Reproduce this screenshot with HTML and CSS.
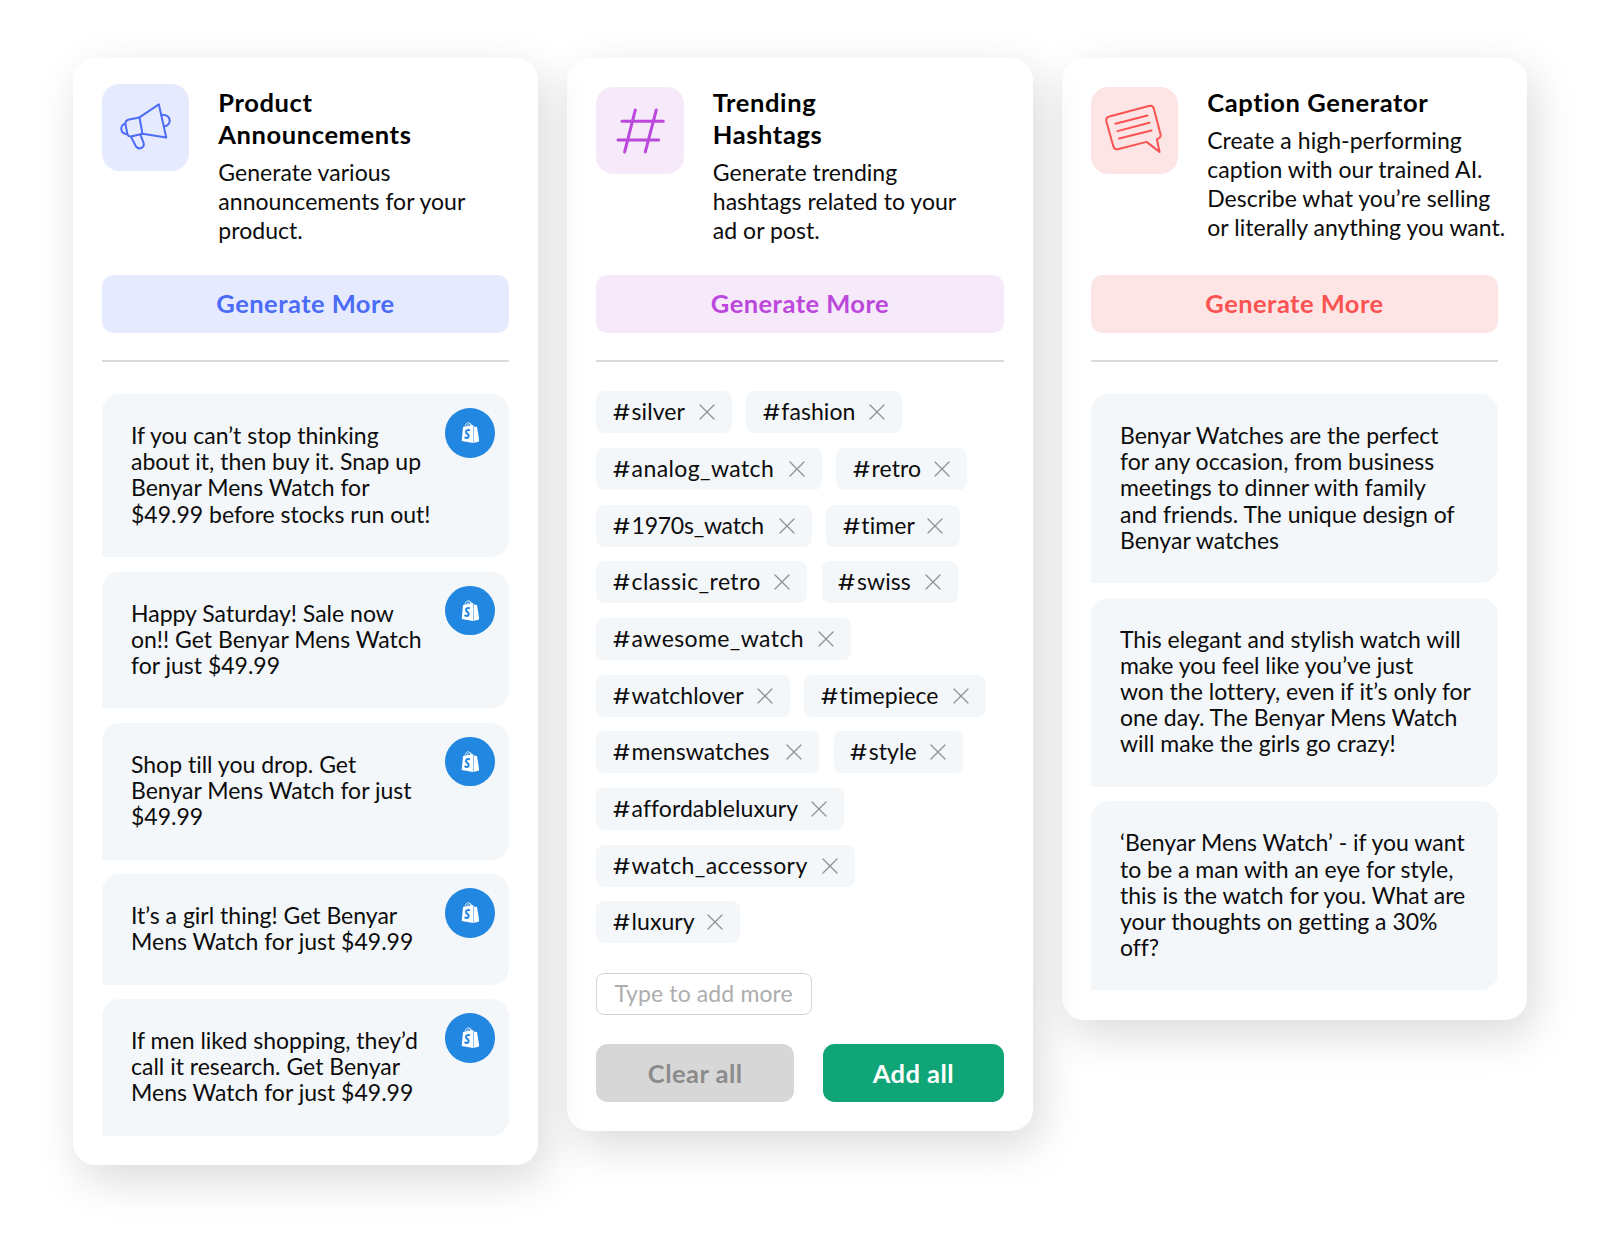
FILE: index.html
```html
<!DOCTYPE html>
<html lang="en">
<head>
<meta charset="utf-8">
<title>AI Content Generator</title>
<link rel="stylesheet" href="styles.css">
</head>
<body>
<svg class="defs" aria-hidden="true">
  <symbol id="bag" viewBox="92 84 56 64">
    <path d="M104 98C105 91 109 86 114 86C119 86 121 91 121 97M110 97C112 91 116 88 119 89C123 90 124 93 124 96" fill="none" stroke="#fff" stroke-width="2.2"/>
    <path d="M98 99L128 93V147L94 141Z" fill="#fff"/>
    <path d="M129.500 94L133 98L140 99L147 142L129.500 147Z" fill="#fff"/>
    <path d="M119 109C113 106 107 109 107 114C107 120 116 120 115 127C114 133 107 133 103 129" fill="none" stroke="#2187e0" stroke-width="6"/>
  </symbol>
  <symbol id="x" viewBox="0 0 16 16"><path d="M1 1L15 15M15 1L1 15" fill="none" stroke="#8f9194" stroke-width="1.300" stroke-linecap="round"/></symbol>
</svg>
<main class="board">
  <section class="card card--blue">
    <header class="head">
      <div class="tile tile--raised">
        <svg viewBox="36 27 261 261" stroke-width="6">
          <path d="M148 127L206 88L228 187L157 176Z"/>
          <path d="M148 127L117 133Q105 136 106 147L112 177Q114 184 123 184L157 176"/>
          <path d="M106 146C88 148 89 177 112 177"/>
          <path d="M214 120C243 116 247 150 222 154"/>
          <path d="M123 185L136 211C144 226 166 219 160 202L151 179"/>
        </svg>
      </div>
      <div class="intro">
        <h2>Product<br>Announcements</h2>
        <p>Generate various<br>announcements for your<br>product.</p>
      </div>
    </header>
    <button class="btn btn--tint">Generate More</button>
    <hr>
    <div class="list">
      <article class="item"><p>If you can’t stop thinking<br>about it, then buy it. Snap up<br>Benyar Mens Watch for<br>$49.99 before stocks run out!</p><span class="badge"><svg><use href="#bag"/></svg></span></article>
      <article class="item"><p>Happy Saturday! Sale now<br>on!! Get Benyar Mens Watch<br>for just $49.99</p><span class="badge"><svg><use href="#bag"/></svg></span></article>
      <article class="item"><p>Shop till you drop. Get<br>Benyar Mens Watch for just<br>$49.99</p><span class="badge"><svg><use href="#bag"/></svg></span></article>
      <article class="item"><p>It’s a girl thing! Get Benyar<br>Mens Watch for just $49.99</p><span class="badge"><svg><use href="#bag"/></svg></span></article>
      <article class="item"><p>If men liked shopping, they’d<br>call it research. Get Benyar<br>Mens Watch for just $49.99</p><span class="badge"><svg><use href="#bag"/></svg></span></article>
    </div>
  </section>

  <section class="card card--purple">
    <header class="head">
      <div class="tile">
        <svg viewBox="109 141 262 262" stroke-width="9">
          <path d="M187 244H311M175 300H297M227 210L195 336M290 210L257 336"/>
        </svg>
      </div>
      <div class="intro">
        <h2>Trending<br>Hashtags</h2>
        <p>Generate trending<br>hashtags related to your<br>ad or post.</p>
      </div>
    </header>
    <button class="btn btn--tint">Generate More</button>
    <hr>
    <div class="chips">
      <span class="chip"><span><b>#</b>silver</span><svg><use href="#x"/></svg></span>
      <span class="chip"><span><b>#</b>fashion</span><svg><use href="#x"/></svg></span>
      <span class="chip chip--snake"><span><b>#</b>analog_watch</span><svg><use href="#x"/></svg></span>
      <span class="chip"><span><b>#</b>retro</span><svg><use href="#x"/></svg></span>
      <span class="chip chip--digits"><span><b>#</b>1970s_watch</span><svg><use href="#x"/></svg></span>
      <span class="chip"><span><b>#</b>timer</span><svg><use href="#x"/></svg></span>
      <span class="chip chip--snake"><span><b>#</b>classic_retro</span><svg><use href="#x"/></svg></span>
      <span class="chip"><span><b>#</b>swiss</span><svg><use href="#x"/></svg></span>
      <span class="chip chip--snake"><span><b>#</b>awesome_watch</span><svg><use href="#x"/></svg></span>
      <span class="chip"><span><b>#</b>watchlover</span><svg><use href="#x"/></svg></span>
      <span class="chip"><span><b>#</b>timepiece</span><svg><use href="#x"/></svg></span>
      <span class="chip"><span><b>#</b>menswatches</span><svg><use href="#x"/></svg></span>
      <span class="chip"><span><b>#</b>style</span><svg><use href="#x"/></svg></span>
      <span class="chip"><span><b>#</b>affordableluxury</span><svg><use href="#x"/></svg></span>
      <span class="chip chip--snake"><span><b>#</b>watch_accessory</span><svg><use href="#x"/></svg></span>
      <span class="chip"><span><b>#</b>luxury</span><svg><use href="#x"/></svg></span>
    </div>
    <input class="add" type="text" placeholder="Type to add more">
    <div class="actions">
      <button class="btn btn--clear">Clear all</button>
      <button class="btn btn--add">Add all</button>
    </div>
  </section>

  <section class="card card--red">
    <header class="head">
      <div class="tile">
        <svg viewBox="33 36 261 261" stroke-width="6">
          <path d="M88 124L206 93Q218 90 221 101L241 178Q243 188 230 192L238 230L199 200L113 222Q103 224 100 214L79 139Q76 127 88 124Z"/>
          <path d="M106 146L202 121M112 168L208 143M117 190L214 166"/>
        </svg>
      </div>
      <div class="intro">
        <h2>Caption Generator</h2>
        <p>Create a high-performing<br>caption with our trained AI.<br>Describe what you’re selling<br>or literally anything you want.</p>
      </div>
    </header>
    <button class="btn btn--tint">Generate More</button>
    <hr>
    <div class="list">
      <article class="item"><p>Benyar Watches are the perfect<br>for any occasion, from business<br>meetings to dinner with family<br>and friends. The unique design of<br>Benyar watches</p></article>
      <article class="item"><p>This elegant and stylish watch will<br>make you feel like you’ve just<br>won the lottery, even if it’s only for<br>one day. The Benyar Mens Watch<br>will make the girls go crazy!</p></article>
      <article class="item"><p>‘Benyar Mens Watch’ - if you want<br>to be a man with an eye for style,<br>this is the watch for you. What are<br>your thoughts on getting a 30%<br>off?</p></article>
    </div>
  </section>
</main>
</body>
</html>
```
FILE: styles.css
```css
* { box-sizing: border-box; margin: 0; padding: 0; }

body {
  background: #fff;
  color: #0c0c0c;
  font: 400 23px/26.18px Lato, "Open Sans", sans-serif;
  font-variant-ligatures: none;
}

.defs { display: none; }

.board {
  display: flex;
  align-items: flex-start;
  gap: 29.1px;
  min-height: 1236px;
  padding: 58px 0 0 72.8px;
}

.card {
  position: relative;
  flex: none;
  width: 465.4px;
  padding: 0 29.1px 29.1px;
  border-radius: 22px;
  background: #fff;
  box-shadow: 7px 14.5px 43.6px rgba(0, 0, 0, .145);
}

/* Each card sits above the shadow of the one to its right. */
.card--blue { --ink: #4a6cf7; --tint: #e6eafe; z-index: 3; }
.card--purple { --ink: #bb47dc; --tint: #f6e9fa; z-index: 2; }
.card--red { --ink: #fb5252; --tint: #fde5e5; z-index: 1; }

.head {
  display: flex;
  gap: 29.1px;
  height: 216.7px;
  padding-top: 29px;
}

.tile {
  flex: none;
  width: 87.3px;
  height: 87.3px;
  border-radius: 17.5px;
  background: var(--tint);
}

.tile--raised { margin-top: -3px; }

.tile svg {
  display: block;
  width: 100%;
  height: 100%;
  fill: none;
  stroke: var(--ink);
  stroke-linecap: round;
  stroke-linejoin: round;
}

.intro { margin-top: -.8px; white-space: nowrap; }

h2 {
  margin-bottom: 7.8px;
  color: #000;
  font-size: 25.5px;
  font-weight: 700;
  line-height: 32px;
  letter-spacing: .6px;
}

.intro p { line-height: 29.1px; letter-spacing: .04px; }

.btn {
  display: block;
  width: 100%;
  height: 58.2px;
  padding-bottom: 1px;
  border: 0;
  border-radius: 11.6px;
  font: 700 25.5px/32px Lato, "Open Sans", sans-serif;
  letter-spacing: .45px;
}

.btn--tint { background: var(--tint); color: var(--ink); }

hr {
  height: 1.5px;
  margin: 27.4px 0 32.3px;
  border: 0;
  background: #dadada;
}

.list { display: flex; flex-direction: column; gap: 14.5px; }

.item {
  position: relative;
  padding: 28px 29.1px 30.2px;
  border-radius: 17.5px 17.5px 17.5px 0;
  background: #f4f7fa;
  white-space: nowrap;
}

.badge {
  position: absolute;
  top: 14px;
  right: 14.5px;
  display: grid;
  place-items: center;
  width: 49.5px;
  height: 49.5px;
  border-radius: 50%;
  background: #2187e0;
}

.badge svg { width: 18.7px; height: 21.3px; }

.chips {
  display: flex;
  flex-wrap: wrap;
  gap: 14.7px 14.5px;
  margin-top: -2.8px;
}

.chip {
  display: flex;
  align-items: center;
  justify-content: space-between;
  height: 42px;
  padding: 0 17px 0 16.5px;
  border-radius: 8px;
  background: #f4f7fa;
  letter-spacing: .07px;
}

.chip > span { padding-bottom: 2px; }

.chip b {
  display: inline-block;
  width: 18.7px;
  font: 400 22px/20px Inter, sans-serif;
  transform: scaleX(1.22);
  transform-origin: 0 50%;
}

.chip svg { width: 16px; height: 16px; }
.chip--snake { letter-spacing: .4px; }
.chip--digits { letter-spacing: -.25px; }

.chip:nth-child(1) { width: 135.3px; }
.chip:nth-child(2) { width: 155.7px; }
.chip:nth-child(3) { width: 225.5px; }
.chip:nth-child(4) { width: 131px; }
.chip:nth-child(5) { width: 215.3px; }
.chip:nth-child(6) { width: 134px; }
.chip:nth-child(7) { width: 211px; }
.chip:nth-child(8) { width: 136.5px; }
.chip:nth-child(9) { width: 254.7px; }
.chip:nth-child(10) { width: 193.5px; }
.chip:nth-child(11) { width: 181.8px; }
.chip:nth-child(12) { width: 222.7px; }
.chip:nth-child(13) { width: 129.5px; }
.chip:nth-child(14) { width: 247.3px; }
.chip:nth-child(15) { width: 259px; }
.chip:nth-child(16) { width: 144px; }

.add {
  display: block;
  width: 215.3px;
  height: 42px;
  margin: 29.3px 0 29.2px;
  padding: 0 16.5px 2px 17px;
  border: 1.3px solid #d4d4d4;
  border-radius: 8px;
  background: #fff;
  font: inherit;
  letter-spacing: .12px;
}

.add::placeholder { color: #adadad; opacity: 1; }

.actions { display: flex; gap: 29.1px; }
.btn--clear { width: 197.6px; background: #d7d7d7; color: #8b8b8b; }
.btn--add { width: 180.5px; background: #0fa577; color: #fff; }
```
